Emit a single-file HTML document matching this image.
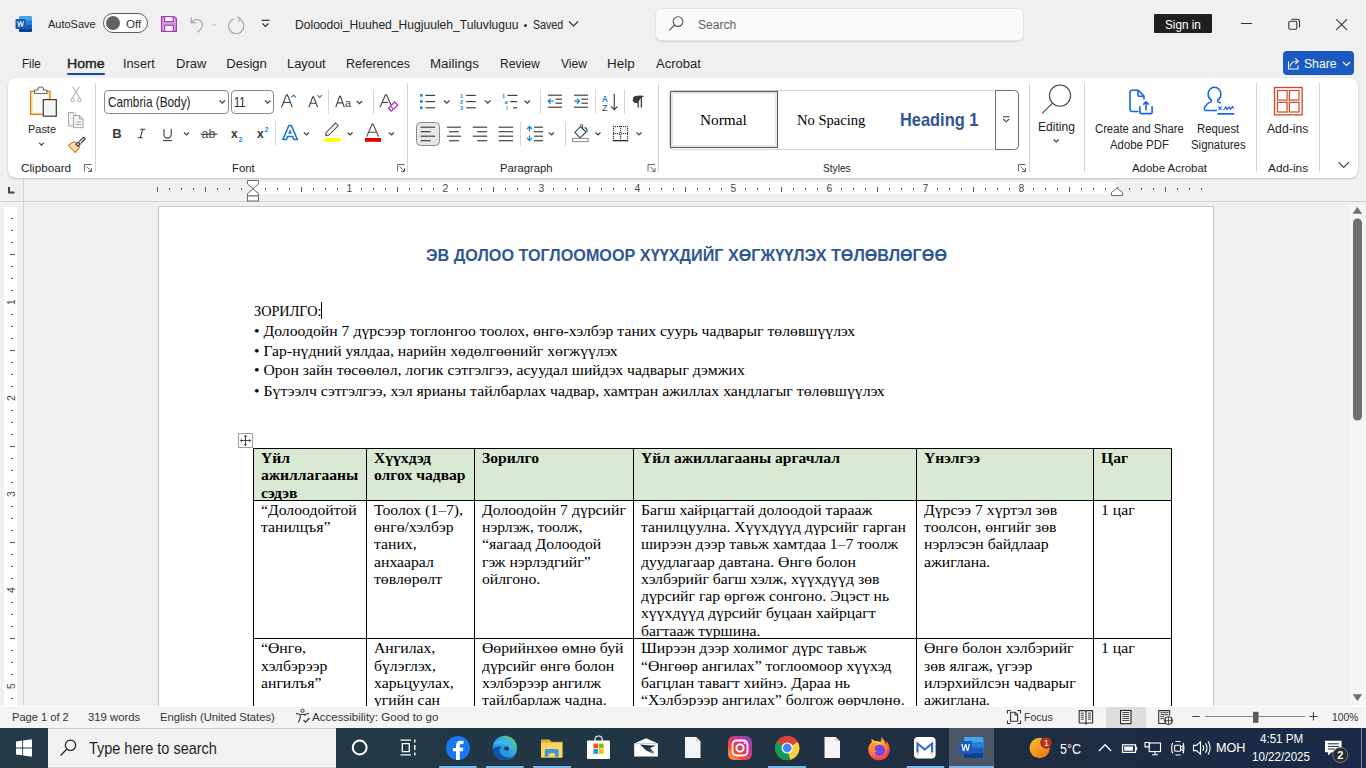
<!DOCTYPE html>
<html><head><meta charset="utf-8">
<style>
*{box-sizing:border-box;margin:0;padding:0}
html,body{width:1366px;height:768px;overflow:hidden;background:#f0f0f0;font-family:"Liberation Sans",sans-serif;color:#242424}
.a{position:absolute}
.t{position:absolute;white-space:nowrap;font-size:13px;line-height:1}
#titlebar{left:0;top:0;width:1366px;height:48px;background:#f0f0f0}
#tabs{left:0;top:48px;width:1366px;height:30px}
#ribbon{left:8px;top:78px;width:1350px;height:100px;background:#fff;border-radius:8px;box-shadow:0 1px 2px rgba(0,0,0,.18)}
#ruler{left:0;top:179px;width:1366px;height:23px;background:#f0f0f0}
#doc{left:0;top:0;width:1366px;height:768px;clip-path:inset(202px 0 62px 0)}
#page{left:158px;top:206px;width:1056px;height:600px;background:#fff;border:1px solid #c6c6c6}
#status{left:0;top:706px;width:1366px;height:22px;background:#f3f3f3}
#taskbar{left:0;top:728px;width:1366px;height:40px;background:#1d3441}
.pl,.tl,.tb{position:absolute;white-space:nowrap;font-family:"Liberation Serif",serif;font-size:15px;line-height:17px;color:#000;transform-origin:0 0}
.tl,.tb{transform:scaleX(1.048)}
.tb{font-weight:bold;transform:scaleX(1.04)}
.L{position:absolute;white-space:nowrap;transform-origin:0 0}
.ti{position:absolute;white-space:nowrap;font-family:"Liberation Sans",sans-serif;font-weight:bold;font-size:17.4px;line-height:20px;color:#305792;transform:scaleX(0.931);transform-origin:0 0}
</style></head>
<body>
<div id="titlebar" class="a"></div>

<svg class="a" style="left:15px;top:15px" width="18" height="18" viewBox="0 0 18 18">
  <rect x="4" y="1" width="13" height="16" rx="1.2" fill="#41a5ee"/>
  <rect x="4" y="5.5" width="13" height="4" fill="#2b7cd3"/>
  <rect x="4" y="9.5" width="13" height="4" fill="#185abd"/>
  <path d="M4 13.5h13v2.3a1.2 1.2 0 0 1-1.2 1.2H5.2A1.2 1.2 0 0 1 4 15.8z" fill="#103f91"/>
  <rect x="0.5" y="4" width="10" height="10" rx="1" fill="#185abd"/>
  <path d="M2.2 6.3l1.3 5.4h1.1l1-3.7 1 3.7h1.1l1.3-5.4h-1l-.8 3.7-1-3.7h-1.1l-1 3.7-.8-3.7z" fill="#fff"/>
</svg>
<div class="a" style="left:103px;top:13px;width:45px;height:20px;border:1px solid #5b5b5b;border-radius:10px;background:#fff"></div>
<div class="a" style="left:106px;top:16px;width:14px;height:14px;border-radius:7px;background:#616161"></div>
<svg class="a" style="left:160px;top:15px" width="18" height="18" viewBox="0 0 18 18">
  <path d="M1.6 1.6h12.6l2.2 2.2v12.6H1.6z" fill="#d8a0e0" stroke="#a83bbb" stroke-width="1.2"/>
  <rect x="4.6" y="1.6" width="8.6" height="5" fill="#fff" stroke="#a83bbb" stroke-width="1.2"/>
  <rect x="4.6" y="10.2" width="8.8" height="6.2" fill="#fff" stroke="#a83bbb" stroke-width="1.2"/>
</svg>
<svg class="a" style="left:189px;top:14px" width="30" height="20" viewBox="0 0 30 20">
  <path d="M2.2 3.2v5.6h5.6" stroke="#9e9e9e" stroke-width="1.1" fill="none"/>
  <path d="M2.6 8.6c2-2.6 4.6-3.6 7.2-2.8 3.6 1.2 4.8 5.8 2.2 9l-3.6 3.6" stroke="#9e9e9e" stroke-width="1.1" fill="none"/>
  <path d="M23.2 9.6l2 2 2-2" stroke="#b0b0b0" stroke-width="1" fill="none"/>
</svg>
<svg class="a" style="left:227px;top:14px" width="20" height="20" viewBox="0 0 20 20">
  <path d="M10.2 2.6l3.2 1.9-2.2 3" stroke="#9e9e9e" stroke-width="1.1" fill="none"/>
  <path d="M13.2 4.6A7.6 7.6 0 1 1 6.8 3.6" stroke="#9e9e9e" stroke-width="1.1" fill="none" transform="translate(0.3,1.2)"/>
</svg>
<svg class="a" style="left:260px;top:17px" width="11" height="12" viewBox="0 0 11 12">
  <path d="M1.5 3.3h8" stroke="#333" stroke-width="1.2"/>
  <path d="M2.5 6.5l3 3 3-3" stroke="#333" stroke-width="1.2" fill="none"/>
</svg>
<div class="a" style="left:524px;top:23.5px;width:3px;height:3px;border-radius:2px;background:#333"></div>
<svg class="a" style="left:568px;top:20px" width="11" height="8" viewBox="0 0 11 8"><path d="M1 1.5l4.5 4.5 4.5-4.5" stroke="#333" stroke-width="1.2" fill="none"/></svg>
<div class="a" style="left:655.5px;top:8.5px;width:367px;height:31px;background:#fafafa;border-radius:5px;box-shadow:0 0 0 1px #e5e5e5,0 1px 1px 1px #d8d8d8"></div>
<svg class="a" style="left:667px;top:15px" width="18" height="18" viewBox="0 0 18 18"><circle cx="11" cy="6.6" r="4.8" stroke="#555" stroke-width="1.1" fill="none"/><path d="M7.6 10L2.3 15.3" stroke="#555" stroke-width="1.2"/></svg>
<div class="a" style="left:1154px;top:14px;width:58px;height:19px;background:#1f1f1f;border-radius:1px"></div>
<div class="a" style="left:1240.5px;top:23px;width:11px;height:1px;background:#333"></div>
<svg class="a" style="left:1287px;top:17px" width="14" height="14" viewBox="0 0 14 14"><rect x="1.8" y="4.2" width="8" height="8" rx="1.5" stroke="#333" stroke-width="1.1" fill="none"/><path d="M4.2 2.2h5.8a2.5 2.5 0 0 1 2.5 2.5v5.8" stroke="#333" stroke-width="1.1" fill="none"/></svg>
<svg class="a" style="left:1335px;top:18px" width="13" height="13" viewBox="0 0 13 13"><path d="M1.3 1.3l10.6 10.6M11.9 1.3L1.3 11.9" stroke="#333" stroke-width="1.1"/></svg>
<div class="a" style="left:67px;top:73px;width:38px;height:2px;background:#0f4aad;border-radius:1px"></div>
<div class="a" style="left:1283px;top:51px;width:71px;height:24px;background:#1b5ac0;border-radius:4px"></div>
<svg class="a" style="left:1287px;top:56px" width="14" height="14" viewBox="0 0 14 14"><path d="M1.5 5.5v7.5h9.5v-3.5" stroke="#fff" stroke-width="1.1" fill="none"/><path d="M3.2 10.8c0.4-3.6 2.8-5.6 6.8-5.6" stroke="#fff" stroke-width="1.1" fill="none"/><path d="M8.2 2.3l3.2 2.9-3.2 2.9" stroke="#fff" stroke-width="1.1" fill="none"/></svg>
<svg class="a" style="left:1342px;top:61px" width="9" height="6" viewBox="0 0 9 6"><path d="M1 1l3.5 3.5L8 1" stroke="#fff" stroke-width="1.1" fill="none"/></svg>
<div class="L" style="left:48.00px;top:18.15px;font-size:11.63px;line-height:11.63px;color:#242424;transform:scaleX(0.9441)">AutoSave</div>
<div class="L" style="left:125.70px;top:18.15px;font-size:11.63px;line-height:11.63px;color:#333;transform:scaleX(1.0034)">Off</div>
<div class="L" style="left:294.58px;top:17.92px;font-size:13.08px;line-height:13.08px;color:#242424;transform:scaleX(0.9248)">Doloodoi_Huuhed_Hugjuuleh_Tuluvluguu</div>
<div class="L" style="left:533.00px;top:17.92px;font-size:13.08px;line-height:13.08px;color:#242424;transform:scaleX(0.8150)">Saved</div>
<div class="L" style="left:697.50px;top:17.92px;font-size:13.08px;line-height:13.08px;color:#616161;transform:scaleX(0.9207)">Search</div>
<div class="L" style="left:1164.80px;top:17.92px;font-size:13.08px;line-height:13.08px;color:#fff;transform:scaleX(0.8964)">Sign in</div>
<div class="L" style="left:21.81px;top:56.92px;font-size:13.08px;line-height:13.08px;color:#242424;transform:scaleX(0.8889)">File</div>
<div class="L" style="left:123.43px;top:56.92px;font-size:13.08px;line-height:13.08px;color:#242424;transform:scaleX(0.9696)">Insert</div>
<div class="L" style="left:176.01px;top:56.92px;font-size:13.08px;line-height:13.08px;color:#242424;transform:scaleX(0.9942)">Draw</div>
<div class="L" style="left:226.20px;top:56.92px;font-size:13.08px;line-height:13.08px;color:#242424">Design</div>
<div class="L" style="left:287.02px;top:56.92px;font-size:13.08px;line-height:13.08px;color:#242424;transform:scaleX(0.9836)">Layout</div>
<div class="L" style="left:346.04px;top:56.92px;font-size:13.08px;line-height:13.08px;color:#242424;transform:scaleX(0.9557)">References</div>
<div class="L" style="left:430.18px;top:56.92px;font-size:13.08px;line-height:13.08px;color:#242424;transform:scaleX(1.0204)">Mailings</div>
<div class="L" style="left:500.37px;top:56.92px;font-size:13.08px;line-height:13.08px;color:#242424;transform:scaleX(0.9308)">Review</div>
<div class="L" style="left:561.10px;top:56.92px;font-size:13.08px;line-height:13.08px;color:#242424;transform:scaleX(0.9245)">View</div>
<div class="L" style="left:606.87px;top:56.92px;font-size:13.08px;line-height:13.08px;color:#242424;transform:scaleX(1.0303)">Help</div>
<div class="L" style="left:656.30px;top:56.92px;font-size:13.08px;line-height:13.08px;color:#242424;transform:scaleX(0.9970)">Acrobat</div>
<div class="L" style="left:66.62px;top:56.92px;font-size:13.08px;line-height:13.08px;color:#242424;transform:scaleX(1.0770);-webkit-text-stroke:0.4px #242424">Home</div>
<div class="L" style="left:1304.20px;top:56.52px;font-size:13.08px;line-height:13.08px;color:#fff;transform:scaleX(0.9300)">Share</div>
<div class="a" style="left:8px;top:78px;width:1350px;height:99.5px;background:#fff;border-radius:8px;box-shadow:0 1px 2px rgba(0,0,0,.2),0 0 1px rgba(0,0,0,.08)"></div>
<svg class="a" style="left:0;top:0" width="1366" height="200">
<path d="M30.6 91.3h19.5v23.1H30.6z" fill="#fde9b7" stroke="#e07b12" stroke-width="1.3"/>
<path d="M33 93h15v19.5H33z" fill="#fafafa"/>
<path d="M34.5 93.5v-3.5h3.2c0-2 1.3-3 3-3s3 1 3 3h3.2v3.5z" fill="#f7f7f7" stroke="#6e6e6e" stroke-width="1.1"/>
<rect x="43.3" y="99.6" width="13" height="16.6" fill="#f5f5f5" stroke="#3a3a3a" stroke-width="1.2"/>
<path d="M39.2 142.8l2.25 2.25 2.25 -2.25" stroke="#424242" stroke-width="1.2" fill="none"/>
<path d="M72.5 86.5l7 11.2M79.5 86.5l-7 11.2" stroke="#a6a6a6" stroke-width="1"/><circle cx="72.6" cy="99.8" r="1.8" stroke="#a6a6a6" fill="none"/><circle cx="79.4" cy="99.8" r="1.8" stroke="#a6a6a6" fill="none"/>
<path d="M68.5 112.5h5.5l2 2v11.5h-7.5z" stroke="#a6a6a6" stroke-width="1" fill="#f4f4f4"/><path d="M73.5 115.5h6l3.5 3.5v8.7h-9.5z" stroke="#a6a6a6" stroke-width="1" fill="#f4f4f4"/><path d="M79.5 115.5v3.5h3.5" stroke="#a6a6a6" stroke-width="1" fill="none"/><path d="M76 122h5M76 124.5h5" stroke="#a6a6a6" stroke-width="1"/>
<path d="M68.6 145.6l5.6-4.2 5.4 5.4-4.2 5.6z" fill="#fff" stroke="#e07b12" stroke-width="1.3" stroke-linejoin="round"/><path d="M70.6 146.4l3.8-2.6 3.6 3.6-2.6 3.8z" fill="#fbd79b"/><path d="M76 144.2l2.2-2.2 2 2-2.2 2.2z" fill="#fff" stroke="#333" stroke-width="1.2"/><path d="M79.3 141.4l3.6-3.6a1.2 1.2 0 0 1 1.7 1.7l-3.6 3.6" fill="#fff" stroke="#333" stroke-width="1.2"/>
<path d="M84.5 171.5v-7h7" stroke="#666" stroke-width="1" fill="none"/><path d="M86.5 166.5l5 5M88 171.5h3.5v-3.5" stroke="#666" stroke-width="1" fill="none"/>
<rect x="95" y="83" width="1" height="89" fill="#d6d6d6"/>
<rect x="104.5" y="90.5" width="124" height="23" rx="3.5" fill="#fff" stroke="#8a8a8a"/>
<path d="M219.5 100.5l2.75 2.75 2.75 -2.75" stroke="#424242" stroke-width="1.2" fill="none"/>
<rect x="231.5" y="90.5" width="42" height="23" rx="3.5" fill="#fff" stroke="#8a8a8a"/>
<path d="M265 100.5l2.75 2.75 2.75 -2.75" stroke="#424242" stroke-width="1.2" fill="none"/>
<path d="M281.5 107.2l4.9-12.4h1l4.9 12.4M283.4 102.5h7" stroke="#424242" stroke-width="1.1" fill="none"/><path d="M291.3 97.3l2.3-2.3 2.3 2.3" stroke="#1a86d8" stroke-width="1.2" fill="none"/>
<path d="M308.8 107.2l4-10.4h.8l4 10.4M310.4 103.2h5.4" stroke="#424242" stroke-width="1.1" fill="none"/><path d="M317.3 95.2l2.3 2.3 2.3-2.3" stroke="#1a86d8" stroke-width="1.2" fill="none"/>
<rect x="328" y="90" width="1" height="24" fill="#d6d6d6"/>
<path d="M335.8 107.2l3.8-10.8h.9l3.8 10.8M337.3 102.9h5.2" stroke="#424242" stroke-width="1.1" fill="none"/><text x="345" y="107.3" font-family="Liberation Sans" font-size="11" fill="#424242">a</text>
<path d="M356.8 101l2.6 2.6 2.6 -2.6" stroke="#424242" stroke-width="1.2" fill="none"/>
<rect x="373" y="90" width="1" height="24" fill="#d6d6d6"/>
<path d="M380 107.2l5.5-12.4h1l4.5 10.2" stroke="#424242" stroke-width="1.1" fill="none"/><path d="M382.1 102.5h6" stroke="#424242" stroke-width="1.1"/><path d="M388.5 108.2l6.2-6.2 3 3-6.2 6.2z" stroke="#a83bbb" stroke-width="1.3" fill="#fff"/><path d="M390.5 106.2l3 3" stroke="#a83bbb" stroke-width="1.1"/>
<text x="112.3" y="138" font-family="Liberation Sans" font-weight="bold" font-size="13" fill="#3a3a3a">B</text>
<path d="M140.3 129.2h5M137.7 137.8h5M142.8 129.2l-2.6 8.6" stroke="#3a3a3a" stroke-width="1.1" fill="none"/>
<path d="M164 129v5.5a3.6 3.6 0 0 0 7.2 0V129" stroke="#3a3a3a" stroke-width="1.1" fill="none"/><path d="M163 140.6h9.2" stroke="#3a3a3a" stroke-width="1.1"/>
<path d="M184 132.5l2.5 2.5 2.5 -2.5" stroke="#424242" stroke-width="1.2" fill="none"/>
<text x="201.5" y="138" font-family="Liberation Sans" font-size="12.5" fill="#555">ab</text><path d="M200.5 134.2h17" stroke="#3a3a3a" stroke-width="1.1"/>
<text x="231" y="138" font-family="Liberation Sans" font-weight="bold" font-size="12" fill="#3a3a3a">x</text><text x="238.5" y="142.3" font-family="Liberation Sans" font-weight="bold" font-size="7" fill="#1a86d8">2</text>
<text x="257" y="138" font-family="Liberation Sans" font-weight="bold" font-size="12" fill="#3a3a3a">x</text><text x="264.5" y="132" font-family="Liberation Sans" font-weight="bold" font-size="7" fill="#1a86d8">2</text>
<rect x="275" y="122" width="1" height="24" fill="#d6d6d6"/>
<path d="M282.8 139.6l6-14h2.6l6 14h-3.6l-1.1-3h-5.2l-1.1 3z" fill="#fff" stroke="#1a74c8" stroke-width="1.5" stroke-linejoin="round"/><path d="M288.2 133.8l1.8-4.8 1.8 4.8z" fill="#1a74c8"/>
<path d="M304 132.5l2.5 2.5 2.5 -2.5" stroke="#424242" stroke-width="1.2" fill="none"/>
<path d="M326 135.6l2.6-.3 9.6-9.6-2.6-2.6-9.6 9.6z" fill="#fff" stroke="#555" stroke-width="1.1"/><path d="M326.6 133.2l-1.8 1.8 1.5.6z" fill="#555"/><rect x="324.2" y="138" width="16" height="3.8" fill="#ffff00"/>
<path d="M347.6 132.5l2.5 2.5 2.5 -2.5" stroke="#424242" stroke-width="1.2" fill="none"/>
<path d="M366.6 136.6l5.6-12.6h.8l5.6 12.6M368.7 132.2h7.8" stroke="#424242" stroke-width="1.1" fill="none"/><rect x="365" y="138" width="16" height="3.8" fill="#e00000"/>
<path d="M389 132.5l2.5 2.5 2.5 -2.5" stroke="#424242" stroke-width="1.2" fill="none"/>
<path d="M397.5 171.5v-7h7" stroke="#666" stroke-width="1" fill="none"/><path d="M399.5 166.5l5 5M401 171.5h3.5v-3.5" stroke="#666" stroke-width="1" fill="none"/>
<rect x="407" y="83" width="1" height="89" fill="#d6d6d6"/>
<rect x="420" y="94" width="2.6" height="2.6" fill="#1a86d8"/><rect x="420" y="100.2" width="2.6" height="2.6" fill="#1a86d8"/><rect x="420" y="106.4" width="2.6" height="2.6" fill="#1a86d8"/><rect x="425.5" y="94.8" width="9.6" height="1.2" fill="#424242"/><rect x="425.5" y="101.0" width="9.6" height="1.2" fill="#424242"/><rect x="425.5" y="107.2" width="9.6" height="1.2" fill="#424242"/>
<path d="M444 100.5l2.75 2.75 2.75 -2.75" stroke="#424242" stroke-width="1.2" fill="none"/>
<text x="460" y="98" font-family="Liberation Sans" font-weight="bold" font-size="5.5" fill="#1a86d8">1</text><text x="460" y="104.2" font-family="Liberation Sans" font-weight="bold" font-size="5.5" fill="#1a86d8">2</text><text x="460" y="110.4" font-family="Liberation Sans" font-weight="bold" font-size="5.5" fill="#1a86d8">3</text><rect x="466.2" y="94.8" width="9.6" height="1.2" fill="#424242"/><rect x="466.2" y="101.0" width="9.6" height="1.2" fill="#424242"/><rect x="466.2" y="107.2" width="9.6" height="1.2" fill="#424242"/>
<path d="M485 100.5l2.75 2.75 2.75 -2.75" stroke="#424242" stroke-width="1.2" fill="none"/>
<text x="502" y="98" font-family="Liberation Sans" font-weight="bold" font-size="5.5" fill="#1a86d8">1</text><text x="504.5" y="104.2" font-family="Liberation Sans" font-weight="bold" font-size="5.5" fill="#1a86d8">a</text><text x="506.3" y="110.4" font-family="Liberation Sans" font-weight="bold" font-size="5.5" fill="#1a86d8">i</text><rect x="507.3" y="94.8" width="10" height="1.2" fill="#424242"/><rect x="510.2" y="101" width="7" height="1.2" fill="#424242"/><rect x="513.2" y="107.2" width="4" height="1.2" fill="#424242"/>
<path d="M524.5 100.5l2.75 2.75 2.75 -2.75" stroke="#424242" stroke-width="1.2" fill="none"/>
<rect x="540" y="90" width="1" height="24" fill="#d6d6d6"/>
<rect x="548" y="94.6" width="14" height="1.2" fill="#424242"/><rect x="555.5" y="98.6" width="6.5" height="1.2" fill="#424242"/><rect x="555.5" y="102.6" width="6.5" height="1.2" fill="#424242"/><rect x="548" y="106.6" width="14" height="1.2" fill="#424242"/><path d="M553.5 101.2h-5M550.7 98.6l-2.6 2.6 2.6 2.6" stroke="#1a86d8" stroke-width="1.3" fill="none"/>
<rect x="574" y="94.6" width="14" height="1.2" fill="#424242"/><rect x="581.5" y="98.6" width="6.5" height="1.2" fill="#424242"/><rect x="581.5" y="102.6" width="6.5" height="1.2" fill="#424242"/><rect x="574" y="106.6" width="14" height="1.2" fill="#424242"/><path d="M574 101.2h5M576.9 98.6l2.6 2.6-2.6 2.6" stroke="#1a86d8" stroke-width="1.3" fill="none"/>
<rect x="595" y="90" width="1" height="24" fill="#d6d6d6"/>
<text x="601.8" y="101.5" font-family="Liberation Sans" font-weight="bold" font-size="8.5" fill="#1a86d8">A</text><text x="602" y="110.5" font-family="Liberation Sans" font-size="9" fill="#424242">Z</text><path d="M614.3 94v15.5M611 106.3l3.3 3.3 3.3-3.3" stroke="#424242" stroke-width="1.2" fill="none"/>
<rect x="624" y="90" width="1" height="24" fill="#d6d6d6"/>
<path d="M642 96.3h-5.6a3.2 3.2 0 0 0 0 6.4h1.4" fill="#3a3a3a" stroke="#3a3a3a" stroke-width="1"/><path d="M638.2 96.3v11.3M641.4 96.3v11.3M637.5 96.3h6" stroke="#3a3a3a" stroke-width="1.3" fill="none"/>
<rect x="416.5" y="122.5" width="23" height="23" rx="4" fill="#e8e8e8" stroke="#8a8a8a"/>
<rect x="420.6" y="126.6" width="14.5" height="1.2" fill="#424242"/><rect x="420.6" y="131.1" width="10" height="1.2" fill="#424242"/><rect x="420.6" y="135.6" width="14.5" height="1.2" fill="#424242"/><rect x="420.6" y="140.1" width="10" height="1.2" fill="#424242"/>
<rect x="447" y="126.6" width="14" height="1.2" fill="#424242"/><rect x="449.2" y="131.1" width="9.6" height="1.2" fill="#424242"/><rect x="447" y="135.6" width="14" height="1.2" fill="#424242"/><rect x="449.2" y="140.1" width="9.6" height="1.2" fill="#424242"/>
<rect x="472.7" y="126.6" width="14.5" height="1.2" fill="#424242"/><rect x="477.2" y="131.1" width="10" height="1.2" fill="#424242"/><rect x="472.7" y="135.6" width="14.5" height="1.2" fill="#424242"/><rect x="477.2" y="140.1" width="10" height="1.2" fill="#424242"/>
<rect x="498.6" y="126.6" width="14.5" height="1.2" fill="#424242"/><rect x="498.6" y="131.1" width="14.5" height="1.2" fill="#424242"/><rect x="498.6" y="135.6" width="14.5" height="1.2" fill="#424242"/><rect x="498.6" y="140.1" width="14.5" height="1.2" fill="#424242"/>
<rect x="520" y="122" width="1" height="24" fill="#d6d6d6"/>
<path d="M529.5 126.5v5M527 129l2.5-2.5 2.5 2.5M529.5 135.5v5M527 138l2.5 2.5 2.5-2.5" stroke="#1a86d8" stroke-width="1.3" fill="none"/><rect x="534" y="126.6" width="9" height="1.2" fill="#424242"/><rect x="534" y="131.1" width="9" height="1.2" fill="#424242"/><rect x="534" y="135.6" width="9" height="1.2" fill="#424242"/><rect x="534" y="140.1" width="9" height="1.2" fill="#424242"/>
<path d="M549 132.5l2.5 2.5 2.5 -2.5" stroke="#424242" stroke-width="1.2" fill="none"/>
<rect x="565" y="122" width="1" height="24" fill="#d6d6d6"/>
<path d="M574.8 132.4l5.8-5.8 5.4 5.4-5.8 5.8z" fill="#fff" stroke="#424242" stroke-width="1.1" stroke-linejoin="round"/><path d="M580.6 126.6v-1.2a1 1 0 0 1 2 0v4.2" stroke="#424242" stroke-width="1" fill="none"/><path d="M584.6 127.6c1.8.4 2.6 2.2 2.4 4.4" stroke="#1a74c8" stroke-width="1.5" fill="none"/><rect x="572.6" y="138.4" width="15.6" height="3.2" fill="#fff" stroke="#8a8a8a" stroke-width="1"/>
<path d="M595.5 132.5l2.5 2.5 2.5 -2.5" stroke="#424242" stroke-width="1.2" fill="none"/>
<rect x="613" y="126" width="1.1" height="1.1" fill="#333"/><rect x="613" y="133" width="1.1" height="1.1" fill="#333"/><rect x="615" y="126" width="1.1" height="1.1" fill="#333"/><rect x="615" y="133" width="1.1" height="1.1" fill="#333"/><rect x="617" y="126" width="1.1" height="1.1" fill="#333"/><rect x="617" y="133" width="1.1" height="1.1" fill="#333"/><rect x="619" y="126" width="1.1" height="1.1" fill="#333"/><rect x="619" y="133" width="1.1" height="1.1" fill="#333"/><rect x="621" y="126" width="1.1" height="1.1" fill="#333"/><rect x="621" y="133" width="1.1" height="1.1" fill="#333"/><rect x="623" y="126" width="1.1" height="1.1" fill="#333"/><rect x="623" y="133" width="1.1" height="1.1" fill="#333"/><rect x="625" y="126" width="1.1" height="1.1" fill="#333"/><rect x="625" y="133" width="1.1" height="1.1" fill="#333"/><rect x="627" y="126" width="1.1" height="1.1" fill="#333"/><rect x="627" y="133" width="1.1" height="1.1" fill="#333"/><rect x="613" y="126" width="1.1" height="1.1" fill="#333"/><rect x="620" y="126" width="1.1" height="1.1" fill="#333"/><rect x="627" y="126" width="1.1" height="1.1" fill="#333"/><rect x="613" y="128" width="1.1" height="1.1" fill="#333"/><rect x="620" y="128" width="1.1" height="1.1" fill="#333"/><rect x="627" y="128" width="1.1" height="1.1" fill="#333"/><rect x="613" y="130" width="1.1" height="1.1" fill="#333"/><rect x="620" y="130" width="1.1" height="1.1" fill="#333"/><rect x="627" y="130" width="1.1" height="1.1" fill="#333"/><rect x="613" y="132" width="1.1" height="1.1" fill="#333"/><rect x="620" y="132" width="1.1" height="1.1" fill="#333"/><rect x="627" y="132" width="1.1" height="1.1" fill="#333"/><rect x="613" y="134" width="1.1" height="1.1" fill="#333"/><rect x="620" y="134" width="1.1" height="1.1" fill="#333"/><rect x="627" y="134" width="1.1" height="1.1" fill="#333"/><rect x="613" y="136" width="1.1" height="1.1" fill="#333"/><rect x="620" y="136" width="1.1" height="1.1" fill="#333"/><rect x="627" y="136" width="1.1" height="1.1" fill="#333"/><rect x="613" y="138" width="1.1" height="1.1" fill="#333"/><rect x="620" y="138" width="1.1" height="1.1" fill="#333"/><rect x="627" y="138" width="1.1" height="1.1" fill="#333"/><circle cx="620.5" cy="133.5" r="1.3" fill="#fff" stroke="#333" stroke-width=".8"/><rect x="612.8" y="140" width="15.4" height="1.3" fill="#222"/>
<path d="M636.5 132.5l2.5 2.5 2.5 -2.5" stroke="#424242" stroke-width="1.2" fill="none"/>
<path d="M648.0 171.5v-7h7" stroke="#666" stroke-width="1" fill="none"/><path d="M650.0 166.5l5 5M651.5 171.5h3.5v-3.5" stroke="#666" stroke-width="1" fill="none"/>
<rect x="658" y="83" width="1" height="89" fill="#d6d6d6"/>
<rect x="669.5" y="90.5" width="349" height="59" rx="4" fill="#fff" stroke="#d2d2d2"/>
<rect x="670.5" y="91.5" width="107" height="56" fill="#fff" stroke="#5a5a5a"/><rect x="672" y="93" width="104" height="53" fill="none" stroke="#e6e6e6" stroke-width="2"/>
<path d="M995.5 90.5h19a4 4 0 0 1 4 4v51a4 4 0 0 1-4 4h-19z" fill="#fff" stroke="#6e6e6e"/>
<rect x="1003" y="116.2" width="6.5" height="1.1" fill="#424242"/><path d="M1003.2 119l3 2.8 3-2.8" stroke="#424242" stroke-width="1.1" fill="none"/>
<path d="M1018.5 171.5v-7h7" stroke="#666" stroke-width="1" fill="none"/><path d="M1020.5 166.5l5 5M1022 171.5h3.5v-3.5" stroke="#666" stroke-width="1" fill="none"/>
<rect x="1029" y="83" width="1" height="89" fill="#d6d6d6"/>
<circle cx="1060" cy="95.6" r="10.6" stroke="#424242" stroke-width="1.1" fill="none"/><path d="M1052.6 103.1l-10.5 10.3" stroke="#424242" stroke-width="1.1"/>
<path d="M1053.7 139.5l2.5 2.5 2.5 -2.5" stroke="#424242" stroke-width="1.2" fill="none"/>
<rect x="1084" y="83" width="1" height="89" fill="#d6d6d6"/>
<path d="M1138.5 111.5h-6.5a2 2 0 0 1-2-2V92.3a2 2 0 0 1 2-2h6.3l5.7 5.8v3.5" stroke="#1364e6" stroke-width="1.6" fill="none" stroke-linejoin="round"/><path d="M1138 90.7v4.6a1 1 0 0 0 1 1h4.5" stroke="#1364e6" stroke-width="1.6" fill="none"/><path d="M1139.9 106.2v6.4a1 1 0 0 0 1 1h10.2a1 1 0 0 0 1-1v-6.4M1146 110.2v-8.3M1143.2 104.6l2.8-2.8 2.8 2.8" stroke="#1364e6" stroke-width="1.6" fill="none" stroke-linejoin="round"/>
<path d="M1217 110.6H1206a1.8 1.8 0 0 1-1.7-2.4c1.2-3.2 3.8-5.4 7-6.6v-1.4c-2-1.4-3.2-3.6-3.2-6.2 0-3.8 2.8-6.8 6.4-6.8s6.4 3 6.4 6.8c0 2.6-1.2 4.8-3.2 6.2v1.4c1.2.4 2.3 1 3.2 1.6" stroke="#1364e6" stroke-width="1.5" fill="none"/><path d="M1218.4 106.6l3.2 3.2M1221.6 106.6l-3.2 3.2M1223.6 109.8l2.2-2.8 1.2 2.6 2.2-2.8 1.2 2.6 2.2-2.8 1.2 2" stroke="#1364e6" stroke-width="1.2" fill="none"/><rect x="1217.4" y="113" width="17" height="1.7" fill="#1364e6"/>
<rect x="1256" y="83" width="1" height="89" fill="#d6d6d6"/>
<rect x="1274.5" y="87.5" width="27.6" height="27.4" fill="none" stroke="#d24726" stroke-width="1.3"/><rect x="1277.5" y="90.5" width="9.6" height="9.6" fill="none" stroke="#d24726" stroke-width="1.2"/><rect x="1289.4" y="90.5" width="9.6" height="9.6" fill="none" stroke="#d24726" stroke-width="1.2"/><rect x="1277.5" y="102.4" width="9.6" height="9.6" fill="none" stroke="#d24726" stroke-width="1.2"/><rect x="1289.4" y="102.4" width="9.6" height="9.6" fill="none" stroke="#d24726" stroke-width="1.2"/>
<rect x="1319" y="83" width="1" height="89" fill="#d6d6d6"/>
<path d="M1338.5 162.2l5.2 5.2 5.2-5.2" stroke="#424242" stroke-width="1.2" fill="none"/>
</svg>
<div class="L" style="left:27.50px;top:123.15px;font-size:11.63px;line-height:11.63px;color:#242424;transform:scaleX(0.9408)">Paste</div>
<div class="L" style="left:20.50px;top:162.15px;font-size:11.63px;line-height:11.63px;color:#242424;transform:scaleX(1.0054)">Clipboard</div>
<div class="L" style="left:107.50px;top:94.69px;font-size:14.54px;line-height:14.54px;color:#242424;transform:scaleX(0.8105)">Cambria (Body)</div>
<div class="L" style="left:233.84px;top:94.69px;font-size:14.54px;line-height:14.54px;color:#242424;transform:scaleX(0.7574)">11</div>
<div class="L" style="left:232.30px;top:162.15px;font-size:11.63px;line-height:11.63px;color:#242424;transform:scaleX(0.9748)">Font</div>
<div class="L" style="left:499.60px;top:162.15px;font-size:11.63px;line-height:11.63px;color:#242424;transform:scaleX(0.9673)">Paragraph</div>
<div class="L" style="left:822.70px;top:162.15px;font-size:11.63px;line-height:11.63px;color:#242424;transform:scaleX(0.8740)">Styles</div>
<div class="L" style="left:700.30px;top:112.21px;font-size:15.27px;line-height:15.27px;font-family:'Liberation Serif',serif;color:#000;transform:scaleX(1.0024)">Normal</div>
<div class="L" style="left:797.10px;top:112.21px;font-size:15.27px;line-height:15.27px;font-family:'Liberation Serif',serif;color:#000;transform:scaleX(0.9539)">No Spacing</div>
<div class="L" style="left:899.70px;top:110.62px;font-size:18.17px;line-height:18.17px;font-weight:bold;color:#2f5496;transform:scaleX(0.9035)">Heading 1</div>
<div class="L" style="left:1037.78px;top:119.92px;font-size:13.08px;line-height:13.08px;color:#242424;transform:scaleX(0.9221)">Editing</div>
<div class="L" style="left:1095.40px;top:121.92px;font-size:13.08px;line-height:13.08px;color:#242424;transform:scaleX(0.8605)">Create and Share</div>
<div class="L" style="left:1110.40px;top:137.92px;font-size:13.08px;line-height:13.08px;color:#242424;transform:scaleX(0.8711)">Adobe PDF</div>
<div class="L" style="left:1197.13px;top:121.92px;font-size:13.08px;line-height:13.08px;color:#242424;transform:scaleX(0.8674)">Request</div>
<div class="L" style="left:1191.00px;top:137.92px;font-size:13.08px;line-height:13.08px;color:#242424;transform:scaleX(0.8732)">Signatures</div>
<div class="L" style="left:1267.10px;top:121.92px;font-size:13.08px;line-height:13.08px;color:#242424;transform:scaleX(0.9307)">Add-ins</div>
<div class="L" style="left:1132.30px;top:162.15px;font-size:11.63px;line-height:11.63px;color:#242424;transform:scaleX(0.9822)">Adobe Acrobat</div>
<div class="L" style="left:1267.60px;top:162.15px;font-size:11.63px;line-height:11.63px;color:#242424;transform:scaleX(1.0162)">Add-ins</div>

<div id="doc" class="a">
<div id="page" class="a"></div>
<div class="ti" style="left:426px;top:244.95px">ЭВ ДОЛОО ТОГЛООМООР ХҮҮХДИЙГ ХӨГЖҮҮЛЭХ ТӨЛӨВЛӨГӨӨ</div>
<div class="pl" style="left:254.3px;top:302.63px;transform:scaleX(0.95)">ЗОРИЛГО:</div>
<div class="pl" style="left:254.3px;top:323.43px;transform:scaleX(1.049)">• Долоодойн 7 дүрсээр тоглонгоо тоолох, өнгө-хэлбэр таних суурь чадварыг төлөвшүүлэх</div>
<div class="pl" style="left:254.3px;top:342.93px;transform:scaleX(1.0466)">• Гар-нүдний уялдаа, нарийн хөдөлгөөнийг хөгжүүлэх</div>
<div class="pl" style="left:254.3px;top:361.93px;transform:scaleX(1.046)">• Орон зайн төсөөлөл, логик сэтгэлгээ, асуудал шийдэх чадварыг дэмжих</div>
<div class="pl" style="left:254.3px;top:383.13px;transform:scaleX(1.053)">• Бүтээлч сэтгэлгээ, хэл ярианы тайлбарлах чадвар, хамтран ажиллах хандлагыг төлөвшүүлэх</div>
<div class="a" style="left:321px;top:302px;width:1px;height:17px;background:#000"></div>
<div class="a" style="left:254px;top:449px;width:917px;height:51px;background:#d9e9d3"></div>
<div class="a" style="left:253px;top:448px;width:1px;height:300px;background:#000"></div>
<div class="a" style="left:366px;top:448px;width:1px;height:300px;background:#000"></div>
<div class="a" style="left:474px;top:448px;width:1px;height:300px;background:#000"></div>
<div class="a" style="left:633px;top:448px;width:1px;height:300px;background:#000"></div>
<div class="a" style="left:916px;top:448px;width:1px;height:300px;background:#000"></div>
<div class="a" style="left:1093px;top:448px;width:1px;height:300px;background:#000"></div>
<div class="a" style="left:1171px;top:448px;width:1px;height:300px;background:#000"></div>
<div class="a" style="left:253px;top:448px;width:919px;height:1px;background:#000"></div>
<div class="a" style="left:253px;top:500px;width:919px;height:1px;background:#000"></div>
<div class="a" style="left:253px;top:638px;width:919px;height:1px;background:#000"></div>
<div class="a" style="left:238px;top:433px;width:15px;height:15px;border:1px solid #a0a0a0;background:#fff"><svg width="13" height="13" viewBox="0 0 13 13" style="position:absolute;left:0;top:0"><path d="M6.5 1.5v10M1.5 6.5h10" stroke="#444" stroke-width="1" fill="none"/><path d="M6.5 0.8l-1.8 2h3.6zM6.5 12.2l-1.8-2h3.6zM0.8 6.5l2-1.8v3.6zM12.2 6.5l-2-1.8v3.6z" fill="#444"/></svg></div>
<div class="tb" style="left:261.3px;top:449.73px">Үйл</div>
<div class="tb" style="left:261.3px;top:467.18px">ажиллагааны</div>
<div class="tb" style="left:261.3px;top:484.63px">сэдэв</div>
<div class="tb" style="left:374.3px;top:449.73px">Хүүхдэд</div>
<div class="tb" style="left:374.3px;top:467.18px">олгох чадвар</div>
<div class="tb" style="left:482.3px;top:449.73px">Зорилго</div>
<div class="tb" style="left:641.3px;top:449.73px">Үйл ажиллагааны аргачлал</div>
<div class="tb" style="left:924.3px;top:449.73px">Үнэлгээ</div>
<div class="tb" style="left:1101.3px;top:449.73px">Цаг</div>
<div class="tl" style="left:261.0px;top:501.83px">“Долоодойтой</div>
<div class="tl" style="left:261.0px;top:519.10px">танилцъя”</div>
<div class="tl" style="left:374.0px;top:501.83px">Тоолох (1–7),</div>
<div class="tl" style="left:374.0px;top:519.10px">өнгө/хэлбэр</div>
<div class="tl" style="left:374.0px;top:536.37px">таних,</div>
<div class="tl" style="left:374.0px;top:553.64px">анхаарал</div>
<div class="tl" style="left:374.0px;top:570.91px">төвлөрөлт</div>
<div class="tl" style="left:482.0px;top:501.83px">Долоодойн 7 дүрсийг</div>
<div class="tl" style="left:482.0px;top:519.10px">нэрлэж, тоолж,</div>
<div class="tl" style="left:482.0px;top:536.37px">“яагаад Долоодой</div>
<div class="tl" style="left:482.0px;top:553.64px">гэж нэрлэдгийг”</div>
<div class="tl" style="left:482.0px;top:570.91px">ойлгоно.</div>
<div class="tl" style="left:641.0px;top:501.83px">Багш хайрцагтай долоодой тарааж</div>
<div class="tl" style="left:641.0px;top:519.10px">танилцуулна. Хүүхдүүд дүрсийг гарган</div>
<div class="tl" style="left:641.0px;top:536.37px">ширээн дээр тавьж хамтдаа 1–7 тоолж</div>
<div class="tl" style="left:641.0px;top:553.64px">дуудлагаар давтана. Өнгө болон</div>
<div class="tl" style="left:641.0px;top:570.91px">хэлбэрийг багш хэлж, хүүхдүүд зөв</div>
<div class="tl" style="left:641.0px;top:588.18px">дүрсийг гар өргөж сонгоно. Эцэст нь</div>
<div class="tl" style="left:641.0px;top:605.45px">хүүхдүүд дүрсийг буцаан хайрцагт</div>
<div class="tl" style="left:641.0px;top:622.72px">багтааж туршина.</div>
<div class="tl" style="left:924.0px;top:501.83px">Дүрсээ 7 хүртэл зөв</div>
<div class="tl" style="left:924.0px;top:519.10px">тоолсон, өнгийг зөв</div>
<div class="tl" style="left:924.0px;top:536.37px">нэрлэсэн байдлаар</div>
<div class="tl" style="left:924.0px;top:553.64px">ажиглана.</div>
<div class="tl" style="left:1101.0px;top:501.83px">1 цаг</div>
<div class="tl" style="left:261.0px;top:640.43px">“Өнгө,</div>
<div class="tl" style="left:261.0px;top:657.70px">хэлбэрээр</div>
<div class="tl" style="left:261.0px;top:674.97px">ангилъя”</div>
<div class="tl" style="left:374.0px;top:640.43px">Ангилах,</div>
<div class="tl" style="left:374.0px;top:657.70px">бүлэглэх,</div>
<div class="tl" style="left:374.0px;top:674.97px">харьцуулах,</div>
<div class="tl" style="left:374.0px;top:692.24px">үгийн сан</div>
<div class="tl" style="left:482.0px;top:640.43px">Өөрийнхөө өмнө буй</div>
<div class="tl" style="left:482.0px;top:657.70px">дүрсийг өнгө болон</div>
<div class="tl" style="left:482.0px;top:674.97px">хэлбэрээр ангилж</div>
<div class="tl" style="left:482.0px;top:692.24px">тайлбарлаж чадна.</div>
<div class="tl" style="left:641.0px;top:640.43px">Ширээн дээр холимог дүрс тавьж</div>
<div class="tl" style="left:641.0px;top:657.70px">“Өнгөөр ангилах” тоглоомоор хүүхэд</div>
<div class="tl" style="left:641.0px;top:674.97px">багцлан тавагт хийнэ. Дараа нь</div>
<div class="tl" style="left:641.0px;top:692.24px">“Хэлбэрээр ангилах” болгож өөрчлөнө.</div>
<div class="tl" style="left:924.0px;top:640.43px">Өнгө болон хэлбэрийг</div>
<div class="tl" style="left:924.0px;top:657.70px">зөв ялгаж, үгээр</div>
<div class="tl" style="left:924.0px;top:674.97px">илэрхийлсэн чадварыг</div>
<div class="tl" style="left:924.0px;top:692.24px">ажиглана.</div>
<div class="tl" style="left:1101.0px;top:640.43px">1 цаг</div>
</div>
<svg class="a" style="left:0;top:0" width="1366" height="768">
<rect x="254" y="182" width="862" height="12" fill="#fdfdfd"/>
<rect x="0" y="201" width="1366" height="1" fill="#d4d4d4"/>
<rect x="23" y="179" width="1" height="527" fill="#d4d4d4"/>
<path d="M9 187v5.5h5.5" stroke="#444" stroke-width="2" fill="none"/>
<rect x="157" y="187" width="1" height="5" fill="#5a5a5a"/><rect x="169" y="188" width="1" height="2" fill="#5a5a5a"/><rect x="181" y="188" width="1" height="2" fill="#5a5a5a"/><rect x="193" y="188" width="1" height="2" fill="#5a5a5a"/><rect x="205" y="187" width="1" height="5" fill="#5a5a5a"/><rect x="217" y="188" width="1" height="2" fill="#5a5a5a"/><rect x="229" y="188" width="1" height="2" fill="#5a5a5a"/><rect x="241" y="188" width="1" height="2" fill="#5a5a5a"/><rect x="253" y="187" width="1" height="5" fill="#5a5a5a"/><rect x="265" y="188" width="1" height="2" fill="#5a5a5a"/><rect x="277" y="188" width="1" height="2" fill="#5a5a5a"/><rect x="289" y="188" width="1" height="2" fill="#5a5a5a"/><rect x="301" y="187" width="1" height="5" fill="#5a5a5a"/><rect x="313" y="188" width="1" height="2" fill="#5a5a5a"/><rect x="325" y="188" width="1" height="2" fill="#5a5a5a"/><rect x="337" y="188" width="1" height="2" fill="#5a5a5a"/><rect x="361" y="188" width="1" height="2" fill="#5a5a5a"/><rect x="373" y="188" width="1" height="2" fill="#5a5a5a"/><rect x="385" y="188" width="1" height="2" fill="#5a5a5a"/><rect x="397" y="187" width="1" height="5" fill="#5a5a5a"/><rect x="409" y="188" width="1" height="2" fill="#5a5a5a"/><rect x="421" y="188" width="1" height="2" fill="#5a5a5a"/><rect x="433" y="188" width="1" height="2" fill="#5a5a5a"/><rect x="457" y="188" width="1" height="2" fill="#5a5a5a"/><rect x="469" y="188" width="1" height="2" fill="#5a5a5a"/><rect x="481" y="188" width="1" height="2" fill="#5a5a5a"/><rect x="493" y="187" width="1" height="5" fill="#5a5a5a"/><rect x="505" y="188" width="1" height="2" fill="#5a5a5a"/><rect x="517" y="188" width="1" height="2" fill="#5a5a5a"/><rect x="529" y="188" width="1" height="2" fill="#5a5a5a"/><rect x="553" y="188" width="1" height="2" fill="#5a5a5a"/><rect x="565" y="188" width="1" height="2" fill="#5a5a5a"/><rect x="577" y="188" width="1" height="2" fill="#5a5a5a"/><rect x="589" y="187" width="1" height="5" fill="#5a5a5a"/><rect x="601" y="188" width="1" height="2" fill="#5a5a5a"/><rect x="613" y="188" width="1" height="2" fill="#5a5a5a"/><rect x="625" y="188" width="1" height="2" fill="#5a5a5a"/><rect x="649" y="188" width="1" height="2" fill="#5a5a5a"/><rect x="661" y="188" width="1" height="2" fill="#5a5a5a"/><rect x="673" y="188" width="1" height="2" fill="#5a5a5a"/><rect x="685" y="187" width="1" height="5" fill="#5a5a5a"/><rect x="697" y="188" width="1" height="2" fill="#5a5a5a"/><rect x="709" y="188" width="1" height="2" fill="#5a5a5a"/><rect x="721" y="188" width="1" height="2" fill="#5a5a5a"/><rect x="745" y="188" width="1" height="2" fill="#5a5a5a"/><rect x="757" y="188" width="1" height="2" fill="#5a5a5a"/><rect x="769" y="188" width="1" height="2" fill="#5a5a5a"/><rect x="781" y="187" width="1" height="5" fill="#5a5a5a"/><rect x="793" y="188" width="1" height="2" fill="#5a5a5a"/><rect x="805" y="188" width="1" height="2" fill="#5a5a5a"/><rect x="817" y="188" width="1" height="2" fill="#5a5a5a"/><rect x="841" y="188" width="1" height="2" fill="#5a5a5a"/><rect x="853" y="188" width="1" height="2" fill="#5a5a5a"/><rect x="865" y="188" width="1" height="2" fill="#5a5a5a"/><rect x="877" y="187" width="1" height="5" fill="#5a5a5a"/><rect x="889" y="188" width="1" height="2" fill="#5a5a5a"/><rect x="901" y="188" width="1" height="2" fill="#5a5a5a"/><rect x="913" y="188" width="1" height="2" fill="#5a5a5a"/><rect x="937" y="188" width="1" height="2" fill="#5a5a5a"/><rect x="949" y="188" width="1" height="2" fill="#5a5a5a"/><rect x="961" y="188" width="1" height="2" fill="#5a5a5a"/><rect x="973" y="187" width="1" height="5" fill="#5a5a5a"/><rect x="985" y="188" width="1" height="2" fill="#5a5a5a"/><rect x="997" y="188" width="1" height="2" fill="#5a5a5a"/><rect x="1009" y="188" width="1" height="2" fill="#5a5a5a"/><rect x="1033" y="188" width="1" height="2" fill="#5a5a5a"/><rect x="1045" y="188" width="1" height="2" fill="#5a5a5a"/><rect x="1057" y="188" width="1" height="2" fill="#5a5a5a"/><rect x="1069" y="187" width="1" height="5" fill="#5a5a5a"/><rect x="1081" y="188" width="1" height="2" fill="#5a5a5a"/><rect x="1093" y="188" width="1" height="2" fill="#5a5a5a"/><rect x="1105" y="188" width="1" height="2" fill="#5a5a5a"/><rect x="1117" y="187" width="1" height="5" fill="#5a5a5a"/><rect x="1129" y="188" width="1" height="2" fill="#5a5a5a"/><rect x="1141" y="188" width="1" height="2" fill="#5a5a5a"/><rect x="1153" y="188" width="1" height="2" fill="#5a5a5a"/><rect x="1165" y="187" width="1" height="5" fill="#5a5a5a"/><rect x="1177" y="188" width="1" height="2" fill="#5a5a5a"/><rect x="1189" y="188" width="1" height="2" fill="#5a5a5a"/><rect x="1201" y="188" width="1" height="2" fill="#5a5a5a"/>
<text x="349.5" y="192" text-anchor="middle" font-family="Liberation Sans" font-size="10.4" fill="#4a4a4a">1</text>
<text x="445.5" y="192" text-anchor="middle" font-family="Liberation Sans" font-size="10.4" fill="#4a4a4a">2</text>
<text x="541.5" y="192" text-anchor="middle" font-family="Liberation Sans" font-size="10.4" fill="#4a4a4a">3</text>
<text x="637.5" y="192" text-anchor="middle" font-family="Liberation Sans" font-size="10.4" fill="#4a4a4a">4</text>
<text x="733.5" y="192" text-anchor="middle" font-family="Liberation Sans" font-size="10.4" fill="#4a4a4a">5</text>
<text x="829.5" y="192" text-anchor="middle" font-family="Liberation Sans" font-size="10.4" fill="#4a4a4a">6</text>
<text x="925.5" y="192" text-anchor="middle" font-family="Liberation Sans" font-size="10.4" fill="#4a4a4a">7</text>
<text x="1021.5" y="192" text-anchor="middle" font-family="Liberation Sans" font-size="10.4" fill="#4a4a4a">8</text>
<path d="M247.5 180.5h11v3.5l-5.5 4.5-5.5-4.5z" fill="#fff" stroke="#6a6a6a"/><path d="M247.5 193.5l5.5-4.5 5.5 4.5v2.5h-11z" fill="#fff" stroke="#6a6a6a"/><rect x="247.5" y="196" width="11" height="5" fill="#fff" stroke="#6a6a6a"/>
<path d="M1111.5 195.5v-3l5.5-4.5 5.5 4.5v3z" fill="#fff" stroke="#6a6a6a"/>
<rect x="4" y="207" width="13" height="499" fill="#fdfdfd"/>
<rect x="11" y="218" width="2" height="1" fill="#5a5a5a"/><rect x="11" y="230" width="2" height="1" fill="#5a5a5a"/><rect x="11" y="242" width="2" height="1" fill="#5a5a5a"/><rect x="10" y="254" width="5" height="1" fill="#5a5a5a"/><rect x="11" y="266" width="2" height="1" fill="#5a5a5a"/><rect x="11" y="278" width="2" height="1" fill="#5a5a5a"/><rect x="11" y="290" width="2" height="1" fill="#5a5a5a"/><rect x="11" y="314" width="2" height="1" fill="#5a5a5a"/><rect x="11" y="326" width="2" height="1" fill="#5a5a5a"/><rect x="11" y="338" width="2" height="1" fill="#5a5a5a"/><rect x="10" y="350" width="5" height="1" fill="#5a5a5a"/><rect x="11" y="362" width="2" height="1" fill="#5a5a5a"/><rect x="11" y="374" width="2" height="1" fill="#5a5a5a"/><rect x="11" y="386" width="2" height="1" fill="#5a5a5a"/><rect x="11" y="410" width="2" height="1" fill="#5a5a5a"/><rect x="11" y="422" width="2" height="1" fill="#5a5a5a"/><rect x="11" y="434" width="2" height="1" fill="#5a5a5a"/><rect x="10" y="446" width="5" height="1" fill="#5a5a5a"/><rect x="11" y="458" width="2" height="1" fill="#5a5a5a"/><rect x="11" y="470" width="2" height="1" fill="#5a5a5a"/><rect x="11" y="482" width="2" height="1" fill="#5a5a5a"/><rect x="11" y="506" width="2" height="1" fill="#5a5a5a"/><rect x="11" y="518" width="2" height="1" fill="#5a5a5a"/><rect x="11" y="530" width="2" height="1" fill="#5a5a5a"/><rect x="10" y="542" width="5" height="1" fill="#5a5a5a"/><rect x="11" y="554" width="2" height="1" fill="#5a5a5a"/><rect x="11" y="566" width="2" height="1" fill="#5a5a5a"/><rect x="11" y="578" width="2" height="1" fill="#5a5a5a"/><rect x="11" y="602" width="2" height="1" fill="#5a5a5a"/><rect x="11" y="614" width="2" height="1" fill="#5a5a5a"/><rect x="11" y="626" width="2" height="1" fill="#5a5a5a"/><rect x="10" y="638" width="5" height="1" fill="#5a5a5a"/><rect x="11" y="650" width="2" height="1" fill="#5a5a5a"/><rect x="11" y="662" width="2" height="1" fill="#5a5a5a"/><rect x="11" y="674" width="2" height="1" fill="#5a5a5a"/><rect x="11" y="698" width="2" height="1" fill="#5a5a5a"/>
<text x="0" y="0" transform="translate(15.2 302) rotate(-90)" text-anchor="middle" font-family="Liberation Sans" font-size="10.4" fill="#4a4a4a">1</text>
<text x="0" y="0" transform="translate(15.2 398) rotate(-90)" text-anchor="middle" font-family="Liberation Sans" font-size="10.4" fill="#4a4a4a">2</text>
<text x="0" y="0" transform="translate(15.2 494) rotate(-90)" text-anchor="middle" font-family="Liberation Sans" font-size="10.4" fill="#4a4a4a">3</text>
<text x="0" y="0" transform="translate(15.2 590) rotate(-90)" text-anchor="middle" font-family="Liberation Sans" font-size="10.4" fill="#4a4a4a">4</text>
<text x="0" y="0" transform="translate(15.2 686) rotate(-90)" text-anchor="middle" font-family="Liberation Sans" font-size="10.4" fill="#4a4a4a">5</text>
<rect x="1349" y="205" width="17" height="501" fill="#f5f5f5"/>
<path d="M1352.5 213.8l4.85-6.8 4.85 6.8z" fill="#707070"/>
<rect x="1353" y="218.5" width="9" height="202" rx="4.5" fill="#707070"/>
<path d="M1352.7 694.2l4.75 6.8 4.75-6.8z" fill="#707070"/>
</svg>
<div class="a" style="left:0;top:706px;width:1366px;height:22px;background:#f4f4f4;border-top:1px solid #fff"></div>
<div class="a" style="left:1106px;top:707px;width:40px;height:21px;background:#dedede"></div>
<svg class="a" style="left:0;top:0" width="1366" height="768">
<circle cx="302.5" cy="710.8" r="1.6" fill="none" stroke="#333" stroke-width="1"/><path d="M296 713.2c2 .9 4 1.3 6.5 1.3s4.5-.4 6.5-1.3M300.2 714.5v3.5l-1.8 4.5M304.8 714.5v1.5" stroke="#333" stroke-width="1.1" fill="none"/><path d="M303.5 720.2l2 2 4-4.2" stroke="#333" stroke-width="1.2" fill="none"/>
<path d="M1007.5 713.5v-3h3M1017.5 710.5h3v3M1020.5 720.5v3h-3M1010.5 723.5h-3v-3" stroke="#333" stroke-width="1.1" fill="none"/><path d="M1010.6 712.2h4.4l2.6 2.6v6.4h-7z" stroke="#333" stroke-width="1.1" fill="none"/><path d="M1014.8 712.2v2.8h2.8" stroke="#333" stroke-width="1" fill="none"/>
<path d="M1079.2 710.6h5.8l1 1 1-1h5.6v12.4h-5.6l-1 1-1-1h-5.8z" stroke="#333" stroke-width="1.1" fill="none"/><path d="M1086 711.5v11.5" stroke="#333" stroke-width="1.1"/><path d="M1080.8 713.2h3M1088 713.2h3" stroke="#333" stroke-width="0.9"/><path d="M1080.8 715.2h3M1088 715.2h3" stroke="#333" stroke-width="0.9"/><path d="M1080.8 717.2h3M1088 717.2h3" stroke="#333" stroke-width="0.9"/><path d="M1080.8 719.2h3M1088 719.2h3" stroke="#333" stroke-width="0.9"/>
<rect x="1120.6" y="710.5" width="10.4" height="13.2" fill="#fff" stroke="#222" stroke-width="1.1"/><path d="M1122.3 712.6h7" stroke="#222" stroke-width="0.9"/><path d="M1122.3 714.6h7" stroke="#222" stroke-width="0.9"/><path d="M1122.3 716.6h7" stroke="#222" stroke-width="0.9"/><path d="M1122.3 718.6h7" stroke="#222" stroke-width="0.9"/><path d="M1122.3 720.6h7" stroke="#222" stroke-width="0.9"/>
<path d="M1165 723.5h-6.3v-12.9h11v5" stroke="#333" stroke-width="1.1" fill="none"/><path d="M1160.4 712.7h8" stroke="#333" stroke-width="0.9"/><path d="M1160.4 714.7h8" stroke="#333" stroke-width="0.9"/><path d="M1160.4 716.7h4" stroke="#333" stroke-width="0.9"/><path d="M1160.4 718.7h4" stroke="#333" stroke-width="0.9"/><circle cx="1168.5" cy="720.6" r="4" fill="#f3f3f3" stroke="#333" stroke-width="1"/><path d="M1164.5 720.6h8M1168.5 716.6v8M1166.2 717.4c-1.2 2-1.2 4.4 0 6.4M1170.8 717.4c1.2 2 1.2 4.4 0 6.4" stroke="#333" stroke-width="0.8" fill="none"/>
<rect x="1192.3" y="716" width="7.5" height="1" fill="#444"/><rect x="1205" y="716" width="100" height="1" fill="#8a8a8a"/><rect x="1253" y="711.8" width="5.5" height="11" fill="#5a5a5a"/><path d="M1309.3 716.5h8.3M1313.45 712.3v8.3" stroke="#444" stroke-width="1.1"/>
</svg>
<div class="a" style="left:0;top:728px;width:1366px;height:40px;background:linear-gradient(90deg,#233c47 0,#213644 600px,#1e2d40 1000px,#1a2947 1366px)"></div>
<div class="a" style="left:48px;top:728px;width:288px;height:40px;background:#f2f2f2;border-top:1px solid #c9c9c9;border-bottom:1px solid #d4d4d4"></div>
<div class="a" style="left:949px;top:728px;width:45px;height:40px;background:rgba(255,255,255,.2)"></div>
<svg class="a" style="left:0;top:0" width="1366" height="768">
<path d="M16 741.5l6.2-.9v6.9H16zM23.1 740.5l8.9-1.3v8.3h-8.9zM16 748.4h6.2v6.9L16 754.4zM23.1 748.4H32v8.3l-8.9-1.3z" fill="#fff"/>
<circle cx="70.5" cy="745.3" r="5.2" stroke="#1a1a1a" stroke-width="1.2" fill="none"/><path d="M66.8 749.1l-6.2 6.4" stroke="#1a1a1a" stroke-width="1.2"/>
<circle cx="359.7" cy="747.5" r="6.9" stroke="#fff" stroke-width="2" fill="none"/>
<path d="M400.5 740.2h10.5M400.5 754.8h10.5M402.3 743.6h7v8h-7z" stroke="#fff" stroke-width="1.3" fill="none"/><path d="M414.8 739.6v3M414.8 745v5M414.8 752.4v3" stroke="#fff" stroke-width="1.4"/>
<circle cx="458" cy="748" r="12" fill="#1877f2"/><path d="M459.8 760v-8.8h3l.5-3.4h-3.5v-2.2c0-1 .3-1.7 1.7-1.7h1.9v-3.1c-.3 0-1.5-.1-2.8-.1-2.7 0-4.6 1.7-4.6 4.7v2.5h-3.1v3.4h3.1v8.8z" fill="#fff"/>
<defs><linearGradient id="eg" x1="0" y1="1" x2="1" y2="0"><stop offset="0" stop-color="#1b6fd0"/><stop offset=".55" stop-color="#2aa8e6"/><stop offset="1" stop-color="#6ad86a"/></linearGradient></defs>
<circle cx="504.8" cy="748" r="12.2" fill="url(#eg)"/><path d="M492.8 749.6c.4 6 5.2 10.6 11.4 10.6 3.4 0 6.4-1.4 8.6-3.6-1.4.6-3 .8-4.6.8-4.6 0-8.6-3-8.6-6.8 0-1.8 1-3.2 2.4-4-4.8-.8-8.6 1-9.2 3z" fill="#1352a8"/><path d="M503.8 744.6c2.6 0 4.4 1.6 4.4 3.4 0 1-.6 1.8-1.6 2.2 3-.2 5.4-1.8 5.4-4.2 0-3.6-4.2-6.6-9.4-6.6-4.4 0-8.2 2.4-9.6 5.8 1.8-1.6 5.2-.6 10.8-.6z" fill="#3fb6f0" opacity=".85"/><ellipse cx="506.6" cy="748.6" rx="2.6" ry="2.2" fill="#1f3a55"/>
<path d="M541 739.5h8.5l2 2.2h10.9v15.8H541z" fill="#e8a92b"/><path d="M541 742.6h21.4v14.9H541z" fill="#fcd462"/><path d="M544.8 756.8v-6.2a1.5 1.5 0 0 1 1.5-1.5h10.8a1.5 1.5 0 0 1 1.5 1.5v6.2h-3.6v-3.6h-6.6v3.6z" fill="#3a96dd"/>
<path d="M595 741v-1.6c0-2 1.6-3.4 3.6-3.4s3.6 1.4 3.6 3.4v1.6" stroke="#fff" stroke-width="1.1" fill="none"/><rect x="587" y="740.6" width="23" height="18.4" rx="1" fill="#fff"/><rect x="593.4" y="743.6" width="4.7" height="4.7" fill="#f25022"/><rect x="598.9" y="743.6" width="4.7" height="4.7" fill="#7fba00"/><rect x="593.4" y="749.1" width="4.7" height="4.7" fill="#00a4ef"/><rect x="598.9" y="749.1" width="4.7" height="4.7" fill="#ffb900"/>
<path d="M634.2 743.6l11.9-5.4 11.8 5.4v13h-23.7z" fill="#fff"/><path d="M634.2 743.6l23.7 0-8.8 3.6 6 6.2-9-4.8z" fill="#213644"/><path d="M634.2 743.6h23.7l-11.8 5.6z" fill="#fff"/><path d="M640 744.6l15.8 1.2-8 3.2 6.6 5.6-8.4-4.4" fill="#213644"/>
<path d="M685 737h11.2l4.3 4.3V758H685z" fill="#f5f5f5"/><path d="M696.2 737v4.3h4.3" fill="#d0d0d0"/>
<path d="M824.5 737h11.2l4.3 4.3V758H824.5z" fill="#f5f5f5"/><path d="M835.7 737v4.3h4.3" fill="#d0d0d0"/>
<defs><linearGradient id="ig" x1="0" y1="1" x2="1" y2="0"><stop offset="0" stop-color="#fdb33b"/><stop offset=".35" stop-color="#f1453d"/><stop offset=".7" stop-color="#c2369d"/><stop offset="1" stop-color="#6d4bcf"/></linearGradient></defs>
<rect x="728" y="736" width="24" height="24" rx="6" fill="url(#ig)"/><rect x="732.5" y="740.5" width="15" height="15" rx="4.2" stroke="#fff" stroke-width="1.8" fill="none"/><circle cx="740" cy="748" r="3.6" stroke="#fff" stroke-width="1.8" fill="none"/><circle cx="744.6" cy="743.3" r="1" fill="#fff"/>
<circle cx="787.2" cy="748" r="12.2" fill="#db4437"/><path d="M787.2 748L776.6 754.1A12.2 12.2 0 0 1 776.6 741.9z" fill="#0f9d58"/><path d="M787.2 748l-10.6 6.1A12.2 12.2 0 0 0 797.8 754.1z" fill="#0f9d58"/><path d="M787.2 748l10.6 6.1A12.2 12.2 0 0 0 799.4 748 12.2 12.2 0 0 0 797.8 741.9z" fill="#ffcd40"/><path d="M787.2 748h12.2a12.2 12.2 0 0 1-9.2 11.8z" fill="#ffcd40"/><path d="M787.2 748l-3 11.8a12.2 12.2 0 0 1-7.6-5.7z" fill="#0f9d58"/><circle cx="787.2" cy="748" r="5.6" fill="#fff"/><circle cx="787.2" cy="748" r="4.4" fill="#4285f4"/>
<defs><radialGradient id="ff" cx=".4" cy=".3" r=".8"><stop offset="0" stop-color="#ffe23e"/><stop offset=".5" stop-color="#ff8a2a"/><stop offset="1" stop-color="#e8196e"/></radialGradient></defs>
<path d="M868.2 749.5a10.8 10.8 0 1 0 21.6 0c0-3.8-1.6-6.6-3.6-8.8.4 1.6.2 3-.4 3.8-.6-3.2-2.2-5.6-4.6-7.6.6 2.2.2 4-1 5-1.6-1-3.6-1.2-5.4-.8-1.2-1.4-2.4-2-3.6-2.2.6 1.4.6 2.8 0 3.8-1.8 1.8-3 4.2-3 6.8z" fill="url(#ff)"/><circle cx="879.4" cy="750.2" r="5.6" fill="#7542e5"/><path d="M870.8 745.4c2-2.4 5-3.4 8-2.6-2.4.8-4 2.6-4.2 4.8-.2 2.2 1.2 4 3.2 4.6-2.6.4-5.2-.8-6.6-3z" fill="#ff8a3a"/>
<rect x="914" y="737" width="21.6" height="21.5" rx="4" fill="#fff"/><path d="M917.5 752.5v-9l7.3 6 7.3-6v9" stroke="#3a6dc8" stroke-width="2.2" fill="none"/><path d="M917 754.8l2-1.5M932.5 754.8l-2-1.5" stroke="#f0a030" stroke-width="1"/>
<rect x="964" y="737" width="19.5" height="21" rx="1.5" fill="#41a5ee"/><rect x="964" y="742.2" width="19.5" height="5.2" fill="#2b7cd3"/><rect x="964" y="747.4" width="19.5" height="5.3" fill="#185abd"/><path d="M964 752.7h19.5v3.8a1.5 1.5 0 0 1-1.5 1.5h-16.5a1.5 1.5 0 0 1-1.5-1.5z" fill="#103f91"/><rect x="959" y="741" width="13" height="13" rx="1.2" fill="#185abd"/><path d="M961.2 744l1.7 7.1h1.4l1.3-4.9 1.3 4.9h1.4l1.7-7.1h-1.3l-1 4.9-1.4-4.9h-1.3l-1.4 4.9-1-4.9z" fill="#fff"/>
<rect x="439.2" y="766" width="37.5" height="2" fill="#76b9ed"/>
<rect x="486" y="766" width="37.700000000000045" height="2" fill="#76b9ed"/>
<rect x="533.2" y="766" width="37.799999999999955" height="2" fill="#76b9ed"/>
<rect x="768.1" y="766" width="37.89999999999998" height="2" fill="#76b9ed"/>
<rect x="906.8" y="766" width="37.40000000000009" height="2" fill="#76b9ed"/>
<rect x="949" y="766" width="45" height="2" fill="#76b9ed"/>
<defs><linearGradient id="wg" x1="0" y1="0" x2="1" y2="1"><stop offset="0" stop-color="#f7c532"/><stop offset="1" stop-color="#f06a0f"/></linearGradient></defs><circle cx="1039.7" cy="748" r="10.2" fill="url(#wg)"/><circle cx="1046.3" cy="742.6" r="5.6" fill="#c42b1c" stroke="#1e2d40" stroke-width="0.6"/><text x="1046.3" y="745.8" text-anchor="middle" font-family="Liberation Sans" font-size="8.5" fill="#fff">1</text>
<path d="M1099 751l6.1-6.2 6.1 6.2" stroke="#fff" stroke-width="1.3" fill="none"/>
<rect x="1122.5" y="744.8" width="13" height="7.6" stroke="#fff" stroke-width="1.2" fill="none"/><rect x="1124.2" y="746.5" width="8.8" height="4.2" fill="#fff"/><rect x="1136" y="746.8" width="1.2" height="3.6" fill="#fff"/>
<rect x="1149.2" y="743" width="11.3" height="8.6" stroke="#fff" stroke-width="1.1" fill="none"/><path d="M1152 754.8h6M1155 751.8v3M1145 742.5h4.4v4.4H1145z" stroke="#fff" stroke-width="1.1" fill="none"/>
<path d="M1172.8 743c-1.4 1.2-1.4 9 0 10.4M1182.8 743c1.4 1.2 1.4 9 0 10.4" stroke="#fff" stroke-width="1.1" fill="none"/><rect x="1174.6" y="745.2" width="6" height="6" rx="1" stroke="#fff" stroke-width="1.1" fill="none"/><path d="M1180.6 747.2l2.4-1.4v4.8l-2.4-1.4" stroke="#fff" stroke-width="1" fill="none"/><path d="M1175.5 741.5h5M1175.5 755h5" stroke="#fff" stroke-width="1"/>
<path d="M1193.5 745.4h3l4-3.6v12.4l-4-3.6h-3z" stroke="#fff" stroke-width="1.1" fill="none"/><path d="M1202.8 745.2c1 1.6 1 4 0 5.6M1205.4 743.2c1.8 2.8 1.8 6.8 0 9.6M1208 741.4c2.6 4 2.6 9.2 0 13.2" stroke="#fff" stroke-width="1.1" fill="none"/>
<path d="M1325 740.8h16.6v11.4h-10l-3.5 3.4v-3.4H1325z" fill="#fff"/><path d="M1327.8 743.8h11M1327.8 746.4h11M1327.8 749h7" stroke="#1a2947" stroke-width="1"/><circle cx="1340.3" cy="755" r="7.6" fill="#2d2d2d" stroke="#8a8a8a" stroke-width="0.8"/><text x="1340.3" y="759.2" text-anchor="middle" font-family="Liberation Sans" font-weight="bold" font-size="11" fill="#fff">2</text>
<rect x="1361" y="728" width="1" height="40" fill="#7c8496"/>
</svg>
<div class="L" style="left:12.30px;top:711.15px;font-size:11.63px;line-height:11.63px;color:#333;transform:scaleX(0.9537)">Page 1 of 2</div>
<div class="L" style="left:87.90px;top:711.15px;font-size:11.63px;line-height:11.63px;color:#333;transform:scaleX(0.9729)">319 words</div>
<div class="L" style="left:160.30px;top:711.15px;font-size:11.63px;line-height:11.63px;color:#333;transform:scaleX(0.9658)">English (United States)</div>
<div class="L" style="left:312.40px;top:711.15px;font-size:11.63px;line-height:11.63px;color:#333;transform:scaleX(0.9932)">Accessibility: Good to go</div>
<div class="L" style="left:1024.40px;top:711.15px;font-size:11.63px;line-height:11.63px;color:#333;transform:scaleX(0.9085)">Focus</div>
<div class="L" style="left:1331.50px;top:711.15px;font-size:11.63px;line-height:11.63px;color:#333;transform:scaleX(0.8853)">100%</div>
<div class="L" style="left:88.80px;top:740.56px;font-size:15.99px;line-height:15.99px;color:#1f1f1f;transform:scaleX(0.9048)">Type here to search</div>
<div class="L" style="left:1060.30px;top:741.92px;font-size:14.39px;line-height:14.39px;color:#fff;transform:scaleX(0.8676)">5°C</div>
<div class="L" style="left:1215.55px;top:741.28px;font-size:13.37px;line-height:13.37px;color:#fff;transform:scaleX(0.9451)">МОН</div>
<div class="L" style="left:1260.00px;top:731.92px;font-size:13.08px;line-height:13.08px;color:#fff;transform:scaleX(0.8847)">4:51 PM</div>
<div class="L" style="left:1252.32px;top:750.20px;font-size:13.23px;line-height:13.23px;color:#fff;transform:scaleX(0.8765)">10/22/2025</div>
</body></html>
